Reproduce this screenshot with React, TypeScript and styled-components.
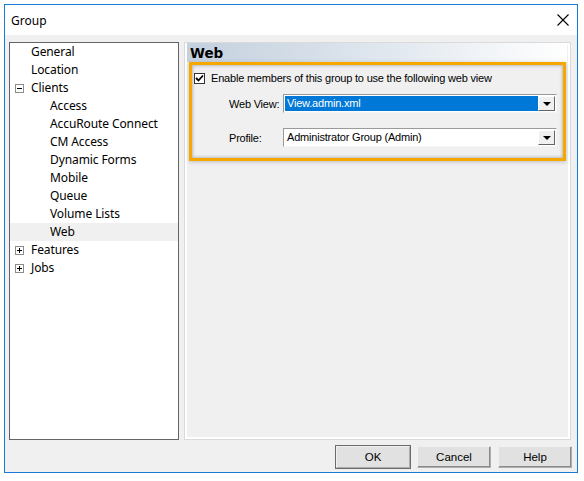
import React from "react";
import styled, { createGlobalStyle } from "styled-components";

const Global = createGlobalStyle`
  html, body { margin: 0; padding: 0; background: #ffffff; }
  body { width: 584px; height: 481px; overflow: hidden; }
`;

const Page = styled.div`
  width: 584px;
  height: 481px;
  padding: 4px 0 0 4px;
  box-sizing: border-box;
`;

const Window = styled.div`
  width: 574px;
  height: 469px;
  border: 1px solid #1a7ad8;
  box-sizing: border-box;
  background: #f0f0f0;
  display: flex;
  flex-direction: column;
`;

const TitleBar = styled.div`
  height: 30px;
  background: #ffffff;
  display: flex;
  align-items: center;
  justify-content: space-between;
  padding: 0 8px 0 6px;
  font-family: "Noto Sans", sans-serif;
  font-size: 12px;
  color: #000;
`;

const Body = styled.div`
  flex: 1;
  display: flex;
  flex-direction: column;
  padding: 7px 6px 4px 4px;
  gap: 6px;
  min-height: 0;
`;

const Content = styled.div`
  height: 398px;
  display: flex;
  gap: 5px;
`;

const Tree = styled.div`
  width: 170px;
  border: 1px solid #646464;
  background: #fff;
  box-sizing: border-box;
  font-family: "Noto Sans", sans-serif;
  font-size: 12px;
  letter-spacing: -0.1px;
  color: #000;
`;

const Row = styled.div<{ $level: number; $selected?: boolean }>`
  height: 18px;
  display: flex;
  align-items: center;
  padding-left: ${(p) => (p.$level === 0 ? 5 : 40)}px;
  background: ${(p) => (p.$selected ? "#f0f0f0" : "transparent")};
  line-height: 18px;
  white-space: nowrap;
`;

const Expander = styled.span`
  width: 9px;
  height: 9px;
  border: 1px solid #8c8c8c;
  box-sizing: border-box;
  margin-right: 7px;
  position: relative;
  flex: none;
  &::before {
    content: "";
    position: absolute;
    left: 1px;
    right: 1px;
    top: 3px;
    height: 1px;
    background: #000;
  }
`;

const PlusExpander = styled(Expander)`
  &::after {
    content: "";
    position: absolute;
    top: 1px;
    bottom: 1px;
    left: 3px;
    width: 1px;
    background: #000;
  }
`;

const NoExpander = styled.span`
  width: 9px;
  margin-right: 7px;
  flex: none;
`;

const Panel = styled.div`
  flex: 1;
  border: 1px solid #dadada;
  box-sizing: border-box;
  background: #f0f0f0;
  box-shadow: inset 0 0 0 2px #ffffff;
  padding: 0 3px 3px 2px;
  display: flex;
  flex-direction: column;
`;

const Header = styled.div`
  height: 19px;
  background: linear-gradient(to right, #c3d0de 0%, #dfe6ee 50%, #ffffff 100%);
  font-family: "DejaVu Sans", sans-serif;
  font-weight: bold;
  font-size: 13.5px;
  line-height: 20px;
  padding-left: 3px;
  color: #000;
`;

const Highlight = styled.div`
  margin: 0 1px 0 2px;
  border: 3px solid #f7a800;
  box-shadow: inset 0 0 3px 1px rgba(120, 120, 120, 0.45), 0 1px 4px rgba(100, 100, 100, 0.35);
  height: 99px;
  box-sizing: border-box;
  padding: 6px 6px 0 2px;
  font-family: "Liberation Sans", Arial, sans-serif;
  font-size: 11px;
  letter-spacing: -0.2px;
  color: #000;
  display: flex;
  flex-direction: column;
`;

const CheckRow = styled.div`
  display: flex;
  align-items: center;
  gap: 6px;
  height: 14px;
  white-space: nowrap;
`;

const CheckBox = styled.span`
  width: 11px;
  height: 11px;
  box-sizing: border-box;
  border: 1px solid #333;
  background: #fff;
  display: flex;
  align-items: center;
  justify-content: center;
`;

const FieldRow = styled.div<{ $top: number }>`
  display: flex;
  align-items: center;
  margin-top: ${(p) => p.$top}px;
  padding-left: 35px;
`;

const Label = styled.span`
  width: 54px;
  flex: none;
  white-space: nowrap;
`;

const Select = styled.div`
  flex: 1;
  height: 19px;
  box-sizing: border-box;
  border: 1px solid #9a9a9a;
  border-right-color: #f4f4f4;
  border-bottom-color: #f4f4f4;
  background: #fff;
  display: flex;
  padding: 1px;
`;

const SelectValue = styled.div<{ $active?: boolean }>`
  flex: 1;
  background: ${(p) => (p.$active ? "#0078d7" : "#fff")};
  color: ${(p) => (p.$active ? "#fff" : "#000")};
  padding-left: 2px;
  line-height: 15px;
  white-space: nowrap;
`;

const DropButton = styled.div`
  width: 17px;
  box-sizing: border-box;
  background: #f0f0f0;
  border-top: 1px solid #fff;
  border-left: 1px solid #fff;
  border-right: 1px solid #646464;
  border-bottom: 1px solid #646464;
  display: flex;
  align-items: center;
  justify-content: center;
`;

const Arrow = styled.span`
  width: 0;
  height: 0;
  border-left: 4px solid transparent;
  border-right: 4px solid transparent;
  border-top: 4px solid #000;
`;

const Buttons = styled.div`
  display: flex;
  justify-content: flex-end;
  gap: 7px;
  margin-right: -1px;
`;

const Button = styled.button<{ $default?: boolean }>`
  width: 74px;
  height: 22px;
  box-sizing: border-box;
  background: #e1e1e1;
  border: 1px solid #adadad;
  border-top-color: #f0f0f0;
  border-left-color: #f0f0f0;
  box-shadow: ${(p) => (p.$default ? "0 0 0 1px #6b6b6b" : "inset -1px -1px 0 #8a8a8a")};
  font-family: "Liberation Sans", Arial, sans-serif;
  font-size: 11.5px;
  color: #000;
  padding: 0;
`;

const treeItems: { label: string; level: number; exp?: "minus" | "plus"; selected?: boolean }[] = [
  { label: "General", level: 0 },
  { label: "Location", level: 0 },
  { label: "Clients", level: 0, exp: "minus" },
  { label: "Access", level: 1 },
  { label: "AccuRoute Connect", level: 1 },
  { label: "CM Access", level: 1 },
  { label: "Dynamic Forms", level: 1 },
  { label: "Mobile", level: 1 },
  { label: "Queue", level: 1 },
  { label: "Volume Lists", level: 1 },
  { label: "Web", level: 1, selected: true },
  { label: "Features", level: 0, exp: "plus" },
  { label: "Jobs", level: 0, exp: "plus" },
];

export default function App() {
  return (
    <Page>
      <Global />
      <Window>
        <TitleBar>
          <span>Group</span>
          <svg width="12" height="12" viewBox="0 0 12 12">
            <path d="M0.5 0.5 L11.5 11.5 M11.5 0.5 L0.5 11.5" stroke="#000" strokeWidth="1.1" />
          </svg>
        </TitleBar>
        <Body>
          <Content>
            <Tree>
              {treeItems.map((it) => (
                <Row key={it.label} $level={it.level} $selected={it.selected}>
                  {it.level === 0 &&
                    (it.exp === "minus" ? (
                      <Expander />
                    ) : it.exp === "plus" ? (
                      <PlusExpander />
                    ) : (
                      <NoExpander />
                    ))}
                  {it.label}
                </Row>
              ))}
            </Tree>
            <Panel>
              <Header>Web</Header>
              <Highlight>
                <CheckRow>
                  <CheckBox>
                    <svg width="9" height="9" viewBox="0 0 9 9">
                      <path d="M1 4 L3.5 6.5 L8 1.5" stroke="#000" strokeWidth="1.8" fill="none" />
                    </svg>
                  </CheckBox>
                  Enable members of this group to use the following web view
                </CheckRow>
                <FieldRow $top={9}>
                  <Label>Web View:</Label>
                  <Select>
                    <SelectValue $active>View.admin.xml</SelectValue>
                    <DropButton>
                      <Arrow />
                    </DropButton>
                  </Select>
                </FieldRow>
                <FieldRow $top={15}>
                  <Label>Profile:</Label>
                  <Select>
                    <SelectValue>Administrator Group (Admin)</SelectValue>
                    <DropButton>
                      <Arrow />
                    </DropButton>
                  </Select>
                </FieldRow>
              </Highlight>
            </Panel>
          </Content>
          <Buttons>
            <Button $default>OK</Button>
            <Button>Cancel</Button>
            <Button>Help</Button>
          </Buttons>
        </Body>
      </Window>
    </Page>
  );
}
